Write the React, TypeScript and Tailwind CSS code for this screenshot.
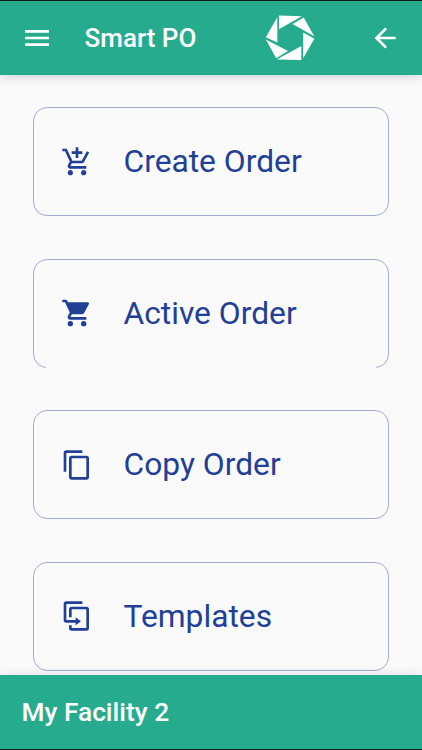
import React from "react";

const icons = {
  menu: "M3 6h18v2H3V6m0 5h18v2H3v-2m0 5h18v2H3v-2z",
  back: "M20 11v2H8l5.5 5.5-1.42 1.42L4.16 12l7.92-7.92L13.5 5.5 8 11h12z",
  cartAdd:
    "M11 9h2V6h3V4h-3V1h-2v3H8v2h3v3zm-4 9c-1.1 0-1.99.9-1.99 2S5.9 22 7 22s2-.9 2-2-.9-2-2-2zm10 0c-1.1 0-1.99.9-1.99 2s.89 2 1.99 2 2-.9 2-2-.9-2-2-2zm-9.83-3.25l.03-.12.9-1.63h7.45c.75 0 1.41-.41 1.75-1.03l3.86-7.01L19.42 4h-.01l-1.1 2-2.76 5H8.53l-.13-.27L6.16 6l-.95-2-.94-2H1v2h2l3.6 7.59-1.35 2.45c-.16.28-.25.61-.25.96 0 1.1.9 2 2 2h12v-2H7.42c-.13 0-.25-.11-.25-.25z",
  cart:
    "M17 18a2 2 0 1 0 0 4 2 2 0 0 0 0-4zM1 2v2h2l3.6 7.59-1.36 2.45c-.15.28-.24.61-.24.96a2 2 0 0 0 2 2h12v-2H7.42a.25.25 0 0 1-.25-.25l.03-.12.9-1.63h7.45c.75 0 1.41-.42 1.75-1.03l3.58-6.47A1 1 0 0 0 20 4H5.21l-.94-2H1zm6 16a2 2 0 1 0 0 4 2 2 0 0 0 0-4z",
  copy:
    "M19 21H8V7h11m0-2H8a2 2 0 0 0-2 2v14a2 2 0 0 0 2 2h11a2 2 0 0 0 2-2V7a2 2 0 0 0-2-2m-3-4H4a2 2 0 0 0-2 2v14h2V3h12V1z",
  duplicate:
    "M11 17H4a2 2 0 0 1-2-2V3a2 2 0 0 1 2-2h12v2H4v12h7v-2l4 3-4 3v-2m8 4V7H8v6H6V7a2 2 0 0 1 2-2h11a2 2 0 0 1 2 2v14a2 2 0 0 1-2 2H8a2 2 0 0 1-2-2v-2h2v2h11z",
};

function Icon({ name }: { name: keyof typeof icons }) {
  return (
    <svg viewBox="0 0 24 24" className="size-8 shrink-0" fill="currentColor" aria-hidden="true">
      <path d={icons[name]} />
    </svg>
  );
}

function Logo() {
  return (
    <svg viewBox="0 0 50 46" className="ml-[69.5px] h-[46px] w-[50px] shrink-0" fill="currentColor" aria-hidden="true">
      <path d="M14 .6 36.8 1.2 14 14.2z" />
      <path d="M38.7 2.4 49.2 21.2 27.6 8.9z" />
      <path d="M38.2 17.5 49.3 23.8 38.2 43.3z" />
      <path d="M36.3 31V44.9L11.8 44.5z" />
      <path d="M.8 24.6 23 36 11.2 43.3z" />
      <path d="M12.3 2.2V27.6L.8 22.3z" />
    </svg>
  );
}

const entries: { label: string; icon: keyof typeof icons; openBottom?: boolean }[] = [
  { label: "Create Order", icon: "cartAdd" },
  { label: "Active Order", icon: "cart", openBottom: true },
  { label: "Copy Order", icon: "copy" },
  { label: "Templates", icon: "duplicate" },
];

export default function App() {
  return (
    <div className="flex h-[750px] w-[422px] flex-col overflow-hidden border-y border-[#101c18] bg-[#fafafa] font-[Roboto,sans-serif]">
      <header className="z-10 flex h-[74px] shrink-0 items-center bg-[#26ab8e] pl-[21px] text-white shadow-[0_2px_10px_rgba(0,0,0,0.16)]">
        <Icon name="menu" />
        <h1 className="ml-[31.5px] w-[111px] text-[26px] font-medium leading-8 whitespace-nowrap">Smart PO</h1>
        <Logo />
        <button className="ml-[54px]" aria-label="Back">
          <Icon name="back" />
        </button>
      </header>
      <main className="flex min-h-0 flex-1 flex-col gap-[42.6px] overflow-hidden px-[33px] pt-8">
        {entries.map((entry) => (
          <button
            key={entry.label}
            className="relative flex h-[109px] w-[356px] shrink-0 items-center rounded-[14px] border border-[#a0acd0] pl-[27px] text-left text-[#1f4096]"
          >
            <Icon name={entry.icon} />
            <span className="ml-[30.5px] pt-[1.6px] text-[31.75px] leading-10 whitespace-nowrap">{entry.label}</span>
            {entry.openBottom && <span className="absolute inset-x-[12px] -bottom-[2px] h-[3px] bg-[#fafafa]" />}
          </button>
        ))}
      </main>
      <footer className="z-10 flex h-[74px] shrink-0 items-center bg-[#26ab8e] pl-[21.5px] pt-[2px] text-[26.3px] font-medium text-white shadow-[0_-1px_10px_rgba(0,0,0,0.1)]">
        My Facility 2
      </footer>
    </div>
  );
}
